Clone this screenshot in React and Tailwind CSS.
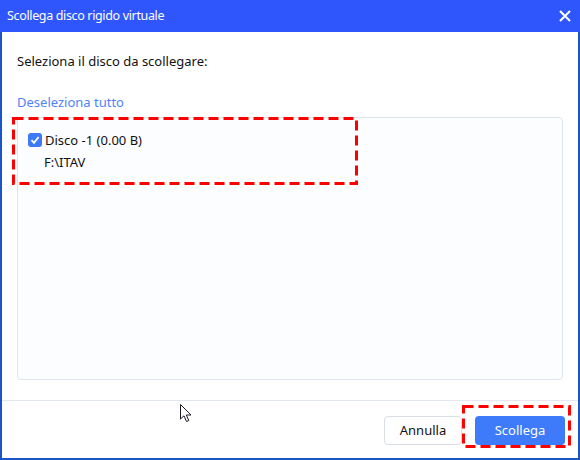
import React from "react";

function DashBox({ className, w, h }) {
  return (
    <svg className={className} width={w} height={h} viewBox={`0 0 ${w} ${h}`}>
      <rect x="1.5" y="1.5" width={w - 3} height={h - 3} fill="none" stroke="#ff0000" strokeWidth="3" strokeDasharray="10 5" />
    </svg>
  );
}

export default function App() {
  return (
    <div className="relative w-[580px] h-[460px] bg-white overflow-hidden" style={{ fontFamily: '"Noto Sans", "Liberation Sans", sans-serif' }}>
      <div className="flex flex-col h-full border-l-2 border-r-2 border-b-2 border-[#1d55c9]">
        {/* title bar */}
        <div className="h-[32px] bg-[#2f55fd] flex items-center justify-between pl-[5px] pr-[8px] text-white -mx-[2px]">
          <span className="pl-[2px] text-[12.5px] tracking-[-0.35px]">Scollega disco rigido virtuale</span>
          <svg width="12" height="12" viewBox="0 0 12 12" className="mr-[1px]">
            <path d="M1 1 L11 11 M11 1 L1 11" stroke="white" strokeWidth="2" />
          </svg>
        </div>
        {/* body */}
        <div className="flex-1 flex flex-col px-[15px]">
          <div className="pt-[20px] text-[13px] text-[#111111] leading-[18px]">Seleziona il disco da scollegare:</div>
          <div className="pt-[23px] text-[13px] text-[#4f84f8] leading-[18px]">Deseleziona tutto</div>
          <div className="mt-[6px] h-[263px] border border-[#dfe5ee] rounded-[4px] bg-[#fcfdfe] pl-[10px] pt-[13px] relative">
            <div className="flex items-center gap-[3px] text-[13px] text-[#111111] leading-[18px]">
              <span className="w-[14px] h-[14px] rounded-[3px] bg-[#3f7af6] flex items-center justify-center">
                <svg width="10" height="10" viewBox="0 0 10 10">
                  <path d="M1.5 5.2 L4 7.8 L8.6 2" stroke="white" strokeWidth="1.8" fill="none" />
                </svg>
              </span>
              <span>Disco -1 (0.00 B)</span>
            </div>
            <div className="pl-[16px] pt-[4px] text-[13px] text-[#111111] leading-[18px]">F:\ITAV</div>
          </div>
        </div>
        {/* footer */}
        <div className="h-[58px] border-t border-[#e3e7ee] flex items-center justify-end gap-[13px] pr-[13px] pt-[2px]">
          <button className="w-[78px] h-[29px] border border-[#d9dee6] rounded-[4px] bg-white text-[13px] text-[#111111]">Annulla</button>
          <button className="w-[90px] h-[29px] rounded-[4px] bg-[#3d7bfb] text-[13px] text-white">Scollega</button>
        </div>
      </div>
      {/* red dashed highlights */}
      <DashBox className="absolute left-[12px] top-[117px]" w={346} h={68} />
      <DashBox className="absolute left-[462px] top-[405px]" w={109} h={43} />
      {/* cursor */}
      <svg className="absolute left-[180px] top-[404px]" width="14" height="20" viewBox="0 0 14 20">
        <path d="M0.5 0.5 L0.5 15 L4 11.8 L6.5 17.5 L8.8 16.5 L6.3 11 L11 11 Z" fill="white" stroke="#1a1a2a" strokeWidth="1" />
      </svg>
    </div>
  );
}
